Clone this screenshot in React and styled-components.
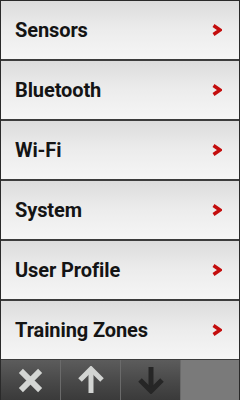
import React from 'react';
import styled, { createGlobalStyle } from 'styled-components';

const GlobalStyle = createGlobalStyle`
  html, body {
    margin: 0;
    padding: 0;
    background: #1a1a1a;
  }
`;

const Screen = styled.div`
  width: 240px;
  height: 400px;
  display: flex;
  flex-direction: column;
  box-sizing: border-box;
  border-left: 1px solid #2a2a2a;
  border-right: 1px solid #2a2a2a;
  border-top: 1px solid #2a2a2a;
  background: #f4f4f4;
  overflow: hidden;
  font-family: Roboto, "Liberation Sans", sans-serif;
`;

const MenuList = styled.div`
  flex: 1;
  display: flex;
  flex-direction: column;
`;

const Row = styled.div`
  height: 58px;
  display: flex;
  align-items: center;
  justify-content: space-between;
  padding: 0 17px 0 14px;
  background: linear-gradient(to bottom, #dcdcdc 0%, #ebebeb 45%, #f6f6f6 100%);
  border-bottom: 2px solid #3c3c3c;

  &:last-child {
    height: 58px;
    border-bottom: 1px solid #3c3c3c;
  }
`;

const Label = styled.span`
  font-size: 20px;
  font-weight: 700;
  color: #141414;
  letter-spacing: -0.1px;
`;

const Toolbar = styled.div`
  height: 41px;
  display: grid;
  grid-template-columns: 60px 60px 60px 1fr;
  background: #777;
`;

const ToolButton = styled.div`
  display: flex;
  align-items: center;
  justify-content: center;
  background: linear-gradient(to bottom, #5c5c5c 0%, #4a4a4a 50%, #3a3a3a 100%);
  border-right: 1px solid #6a6a6a;
  box-sizing: border-box;
`;

const Spacer = styled.div`
  background: #7a7a7a;
`;

const Chevron = () => (
  <svg width="10" height="12" viewBox="0 0 10 12">
    <path d="M1.5 1.5 L8 6 L1.5 10.5" fill="none" stroke="#c40d0d" strokeWidth="3.4" strokeLinejoin="miter" />
  </svg>
);

const CloseIcon = () => (
  <svg width="25" height="25" viewBox="0 0 26 26">
    <path d="M3 3 L23 23 M23 3 L3 23" stroke="#d4d6d4" strokeWidth="6" strokeLinecap="butt" />
  </svg>
);

const UpIcon = () => (
  <svg width="26" height="28" viewBox="0 0 26 28">
    <path d="M13 3 L13 27" stroke="#d2d4d2" strokeWidth="5" />
    <path d="M2 14 L13 3 L24 14" fill="none" stroke="#d2d4d2" strokeWidth="5" />
  </svg>
);

const DownIcon = () => (
  <svg width="26" height="28" viewBox="0 0 26 28">
    <path d="M13 1 L13 25" stroke="#262626" strokeWidth="5" />
    <path d="M2 14 L13 25 L24 14" fill="none" stroke="#262626" strokeWidth="5" />
  </svg>
);

const items = ['Sensors', 'Bluetooth', 'Wi-Fi', 'System', 'User Profile', 'Training Zones'];

export default function App() {
  return (
    <>
      <GlobalStyle />
      <Screen>
        <MenuList>
          {items.map((item) => (
            <Row key={item}>
              <Label>{item}</Label>
              <Chevron />
            </Row>
          ))}
        </MenuList>
        <Toolbar>
          <ToolButton><CloseIcon /></ToolButton>
          <ToolButton><UpIcon /></ToolButton>
          <ToolButton><DownIcon /></ToolButton>
          <Spacer />
        </Toolbar>
      </Screen>
    </>
  );
}
